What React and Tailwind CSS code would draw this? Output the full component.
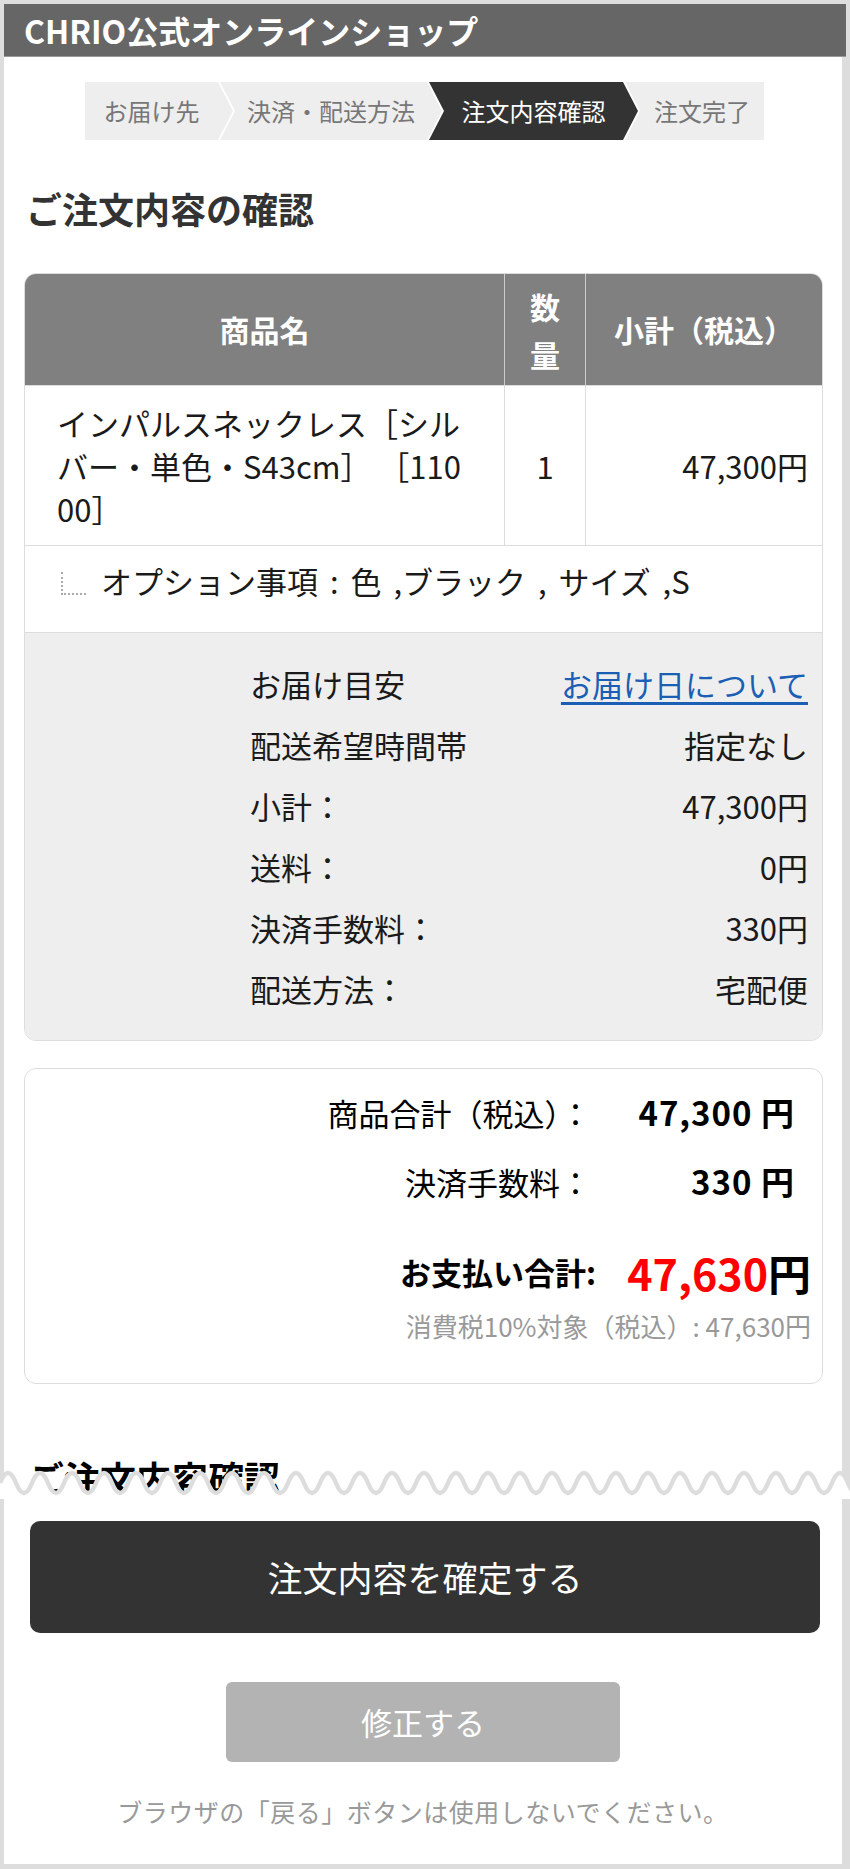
import React from "react";

const steps = [
  {
    label: "お届け先",
    box: "w-[148px] pr-[15px] bg-[#eeeeee] text-[#777777] [clip-path:polygon(0_0,calc(100%_-_15px)_0,100%_50%,calc(100%_-_15px)_100%,0_100%)]",
  },
  {
    label: "決済・配送方法",
    box: "w-[222px] -ml-[13px] px-[15px] bg-[#eeeeee] text-[#777777] [clip-path:polygon(0_0,calc(100%_-_15px)_0,100%_50%,calc(100%_-_15px)_100%,0_100%,15px_50%)]",
  },
  {
    label: "注文内容確認",
    box: "w-[209px] -ml-[13px] px-[15px] bg-[#333333] text-white [clip-path:polygon(0_0,calc(100%_-_15px)_0,100%_50%,calc(100%_-_15px)_100%,0_100%,15px_50%)]",
  },
  {
    label: "注文完了",
    box: "w-[139px] -ml-[13px] pl-[15px] bg-[#eeeeee] text-[#777777] [clip-path:polygon(0_0,100%_0,100%_100%,0_100%,15px_50%)]",
  },
];

const details = [
  ["配送希望時間帯", "指定なし"],
  ["小計：", "47,300円"],
  ["送料：", "0円"],
  ["決済手数料：", "330円"],
  ["配送方法：", "宅配便"],
];

// wavy top edge of the fixed footer
const wavePath = () => {
  let d = "M0 14";
  for (let x = 0; x < 870; x += 32) {
    d += ` Q${x + 8} -6 ${x + 16} 14 Q${x + 24} 34 ${x + 32} 14`;
  }
  return d;
};

const Footer = () => {
  const line = wavePath();
  return (
    <div className="absolute left-0 right-0 bottom-[5px]">
      <svg width="850" height="30" className="block overflow-visible">
        <path d={`${line} L880 30 L0 30 Z`} fill="#ffffff" />
        <path d={line} fill="none" stroke="#dddddd" strokeWidth="4.5" />
      </svg>
      <div className="ml-[4px] mr-[8px] bg-white pt-[22px] pb-[35px] flex flex-col items-center">
        <button className="ml-[4px] w-[790px] h-[112px] rounded-[10px] bg-[#333333] text-white text-[35px]">
          注文内容を確定する
        </button>
        <button className="mt-[49px] w-[394px] h-[80px] rounded-[6px] bg-[#b3b3b3] text-white text-[31px]">
          修正する
        </button>
        <p className="mt-[31px] h-[36px] leading-[36px] text-[25px] tracking-[0.5px] text-[#999999]">
          ブラウザの「戻る」ボタンは使用しないでください。
        </p>
      </div>
    </div>
  );
};

export default function App() {
  return (
    <div className="relative w-[850px] h-[1869px] overflow-hidden bg-[#dddddd] pt-[4px] font-['Noto_Sans_CJK_JP','Noto_Sans',sans-serif] text-[#1a1a1a]">
      <header className="ml-[4px] w-[842px] h-[53px] bg-[#666666] border-b border-[#999999] flex items-center pl-[20px]">
        <h1 className="text-white font-bold text-[32px] leading-none">CHRIO公式オンラインショップ</h1>
      </header>

      <main className="ml-[4px] w-[838px] h-[1807px] bg-white pt-[25px]">
        <nav className="ml-[81px] flex h-[58px] text-[24px]">
          {steps.map((s) => (
            <div key={s.label} className={`${s.box} flex items-center justify-center whitespace-nowrap`}>
              {s.label}
            </div>
          ))}
        </nav>

        <h2 className="mt-[43px] pl-[22px] text-[36px] leading-[50px] font-bold text-[#333333]">ご注文内容の確認</h2>

        <div className="ml-[20px] mt-[40px] w-[799px] rounded-[12px] border border-[#dddddd] overflow-hidden">
          <div className="flex h-[111px] bg-[#808080] text-white font-bold text-[30px]">
            <div className="w-[479px] flex items-center justify-center">商品名</div>
            <div className="w-[81px] border-l border-[#cccccc] flex items-center justify-center px-[20px] text-center leading-[48px]">
              数量
            </div>
            <div className="flex-1 border-l border-[#cccccc] flex items-center justify-center">小計（税込）</div>
          </div>

          <div className="flex h-[160px] border-t border-[#dddddd] text-[31px] leading-[43px]">
            <div className="w-[479px] flex items-center pl-[32px] pr-[37px]">
              <p className="break-all">インパルスネックレス［シルバー・単色・S43cm］ ［11000］</p>
            </div>
            <div className="w-[81px] border-l border-[#dddddd] flex items-center justify-center">1</div>
            <div className="flex-1 border-l border-[#dddddd] flex items-center justify-end pr-[14px]">47,300円</div>
          </div>

          <div className="flex h-[87px] border-t border-[#dddddd] pt-[13px] text-[31px] leading-[43px]">
            <span className="ml-[36px] mt-[13px] w-[25px] h-[23px] border-l-2 border-b-2 border-dotted border-[#aaaaaa]" />
            <span className="ml-[15px] [word-spacing:5px]">オプション事項 : 色 ,ブラック , サイズ ,S</span>
          </div>

          <div className="border-t border-[#dddddd] bg-[#eeeeee] pt-[21px] pb-[20px] pl-[225px] pr-[14px] text-[31px]">
            <div className="flex h-[61px] items-center justify-between">
              <span>お届け目安</span>
              <a href="#" className="text-[#1b5fb5] underline underline-offset-[5px]">お届け日について</a>
            </div>
            {details.map(([k, v]) => (
              <div key={k} className="flex h-[61px] items-center justify-between">
                <span>{k}</span>
                <span>{v}</span>
              </div>
            ))}
          </div>
        </div>

        <div className="ml-[20px] mt-[27px] w-[799px] h-[316px] rounded-[12px] border border-[#dddddd] pt-[19px] text-black">
          <div className="flex h-[50px] items-center justify-end pr-[27px]">
            <span className="mr-[14px] text-[31px]">商品合計（税込）：</span>
            <span className="w-[190px] text-right text-[33px] tracking-[1px] font-bold">47,300 円</span>
          </div>
          <div className="mt-[19px] flex h-[50px] items-center justify-end pr-[27px]">
            <span className="mr-[14px] text-[31px]">決済手数料：</span>
            <span className="w-[190px] text-right text-[33px] tracking-[1px] font-bold">330 円</span>
          </div>
          <div className="mt-[35px] flex h-[60px] items-center justify-end pr-[11px] font-bold">
            <span className="mr-[22px] text-[31px]">お支払い合計:</span>
            <span className="w-[193px] text-right text-[43px] leading-none">
              <span className="text-[#ff0000]">47,630</span>円
            </span>
          </div>
          <div className="mt-[5px] flex h-[36px] items-center justify-end pr-[11px] text-[26px] text-[#999999]">
            消費税10%対象（税込）: 47,630円
          </div>
        </div>

        <h2 className="mt-[68px] pl-[24px] text-[36px] leading-[50px] font-bold text-black">ご注文内容確認</h2>
      </main>

      <Footer />
    </div>
  );
}
